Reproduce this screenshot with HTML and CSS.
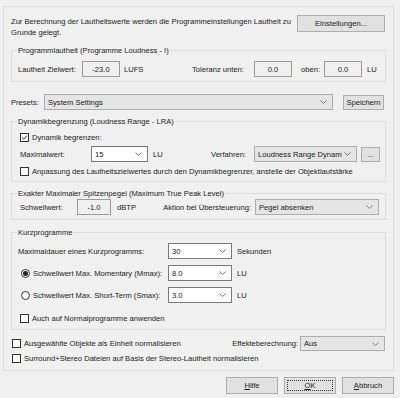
FILE: index.html
```html
<!DOCTYPE html>
<html lang="de">
<head>
<meta charset="utf-8">
<title>Lautheit</title>
<link rel="stylesheet" href="styles.css">
</head>
<body>
<div class="panel">
  <div class="intro">
    <p class="intro-text">Zur Berechnung der Lautheitswerte werden die Programmeinstellungen Lautheit zu<br>Grunde gelegt.</p>
    <button class="btn btn-settings">Einstellungen...</button>
  </div>

  <fieldset class="grp grp-prog">
    <legend>Programmlautheit (Programme Loudness - I)</legend>
    <div class="row pad6">
      <span class="lbl w64">Lautheit Zielwert:</span>
      <span class="tb w38">-23.0</span>
      <span class="lbl ml4 w68">LUFS</span>
      <span class="lbl w62">Toleranz unten:</span>
      <span class="tb w38">0.0</span>
      <span class="lbl ml9 w23">oben:</span>
      <span class="tb w38">0.0</span>
      <span class="lbl ml5">LU</span>
    </div>
  </fieldset>

  <div class="row presets">
    <span class="lbl w33">Presets:</span>
    <span class="cb-drop w289"><span class="val">System Settings</span><svg class="chev" viewBox="0 0 7 4"><path d="M0.5 0.5L3.5 3.5L6.5 0.5"/></svg></span>
    <button class="btn btn-save">Speichern</button>
  </div>

  <fieldset class="grp grp-dyn">
    <legend>Dynamikbegrenzung (Loudness Range - LRA)</legend>
    <div class="line pad8">
      <span class="check"><svg viewBox="0 0 8 8"><path d="M1.3 4L3.2 5.9L6.7 1.9"/></svg></span>
      <span class="ctext">Dynamik begrenzen:</span>
    </div>
    <div class="row pad8 mt3">
      <span class="lbl w71">Maximalwert:</span>
      <span class="cb-edit w57"><span class="val">15</span><svg class="chev" viewBox="0 0 7 4"><path d="M0.5 0.5L3.5 3.5L6.5 0.5"/></svg></span>
      <span class="lbl ml5 w58">LU</span>
      <span class="lbl w43">Verfahren:</span>
      <span class="cb-drop w103"><span class="val">Loudness Range Dynami</span><svg class="chev" viewBox="0 0 7 4"><path d="M0.5 0.5L3.5 3.5L6.5 0.5"/></svg></span>
      <button class="btn btn-dots">...</button>
    </div>
    <div class="line pad8 mt4">
      <span class="check"></span>
      <span class="ctext">Anpassung des Lautheitszielwertes durch den Dynamikbegrenzer, anstelle der Objektlautstärke</span>
    </div>
  </fieldset>

  <fieldset class="grp grp-peak">
    <legend>Exakter Maximaler Spitzenpegel (Maximum True Peak Level)</legend>
    <div class="row pad8">
      <span class="lbl w57">Schwellwert:</span>
      <span class="tb w34">-1.0</span>
      <span class="lbl ml6 w40">dBTP</span>
      <span class="lbl w98 right">Aktion bei Übersteuerung:</span>
      <span class="cb-drop w124"><span class="val">Pegel absenken</span><svg class="chev" viewBox="0 0 7 4"><path d="M0.5 0.5L3.5 3.5L6.5 0.5"/></svg></span>
    </div>
  </fieldset>

  <fieldset class="grp grp-short">
    <legend>Kurzprogramme</legend>
    <div class="row pad6">
      <span class="lbl w150">Maximaldauer eines Kurzprogramms:</span>
      <span class="cb-edit w64"><span class="val">30</span><svg class="chev" viewBox="0 0 7 4"><path d="M0.5 0.5L3.5 3.5L6.5 0.5"/></svg></span>
      <span class="lbl ml5">Sekunden</span>
    </div>
    <div class="row pad6 mt6">
      <span class="radio-wrap w150"><span class="radio on"></span><span class="ctext">Schwellwert Max. Momentary (Mmax):</span></span>
      <span class="cb-edit w64"><span class="val">8.0</span><svg class="chev" viewBox="0 0 7 4"><path d="M0.5 0.5L3.5 3.5L6.5 0.5"/></svg></span>
      <span class="lbl ml5">LU</span>
    </div>
    <div class="row pad6 mt6">
      <span class="radio-wrap w150"><span class="radio"></span><span class="ctext">Schwellwert Max. Short-Term (Smax):</span></span>
      <span class="cb-edit w64"><span class="val">3.0</span><svg class="chev" viewBox="0 0 7 4"><path d="M0.5 0.5L3.5 3.5L6.5 0.5"/></svg></span>
      <span class="lbl ml5">LU</span>
    </div>
    <div class="line pad8 mt10">
      <span class="check"></span>
      <span class="ctext">Auch auf Normalprogramme anwenden</span>
    </div>
  </fieldset>

  <div class="row bottom-row">
    <span class="check ml1"></span>
    <span class="ctext">Ausgewählte Objekte als Einheit normalisieren</span>
    <span class="lbl effekt">Effekteberechnung:</span>
    <span class="cb-drop w85"><span class="val">Aus</span><svg class="chev" viewBox="0 0 7 4"><path d="M0.5 0.5L3.5 3.5L6.5 0.5"/></svg></span>
  </div>
  <div class="line mt2">
    <span class="check ml1"></span>
    <span class="ctext">Surround+Stereo Dateien auf Basis der Stereo-Lautheit normalisieren</span>
  </div>
</div>

<div class="actions">
  <button class="btn btn-act"><u>H</u>ilfe</button>
  <button class="btn btn-act btn-ok"><span class="focus"><u>O</u>K</span></button>
  <button class="btn btn-act"><u>A</u>bbruch</button>
</div>
</body>
</html>
```

FILE: styles.css
```css
* { box-sizing: border-box; }
html, body { margin: 0; padding: 0; }
body {
  width: 400px;
  height: 398px;
  overflow: hidden;
  background: #f0f0f0;
  font-family: "Liberation Sans", Arial, sans-serif;
  font-size: 7.6px;
  color: #1a1a1a;
}

.panel {
  margin: 6px 6px 0 3px;
  height: 365px;
  border: 1px solid #dcdcdc;
  padding: 8px 7px 0 7px;
  display: flex;
  flex-direction: column;
}

.intro {
  display: flex;
  justify-content: space-between;
  align-items: flex-start;
  height: 23px;
}
.intro-text { margin: 1px 0 0; line-height: 11px; white-space: nowrap; }

.btn {
  font: inherit;
  color: #1a1a1a;
  background: #e1e1e1;
  border: 1px solid #adadad;
  padding: 0;
  margin: 0;
  display: flex;
  align-items: center;
  justify-content: center;
}
.btn-settings { width: 88px; height: 17px; margin-right: 1px; }
.btn-save { width: 41px; height: 15px; margin-left: 10px; }
.btn-dots { width: 19px; height: 15px; margin-left: 4px; }

.grp {
  margin: 0;
  padding: 0;
  min-width: 0;
  border: 1px solid #dcdcdc;
}
.grp legend {
  margin-left: 5px;
  padding: 0 1px;
  line-height: 11px;
}
.grp-prog { margin-top: 7px; padding-top: 5px; padding-bottom: 4px; }
.grp-dyn { margin-top: 6px; padding-top: 5px; padding-bottom: 4px; }
.grp-peak { margin-top: 6px; padding-top: 0; padding-bottom: 4px; }
.grp-short { margin-top: 7px; padding-top: 5px; padding-bottom: 5px; }

.row { display: flex; align-items: center; height: 16px; white-space: nowrap; }
.line { display: flex; align-items: center; height: 11px; white-space: nowrap; }
.pad6 { padding-left: 6px; }
.pad8 { padding-left: 8px; }
.mt2 { margin-top: 2px; }
.mt3 { margin-top: 3px; }
.mt4 { margin-top: 4px; }
.mt6 { margin-top: 6px; }
.mt10 { margin-top: 10px; }
.ml1 { margin-left: 1px; }
.ml4 { margin-left: 4px; }
.ml5 { margin-left: 5px; }
.ml6 { margin-left: 6px; }
.ml9 { margin-left: 9px; }

.lbl { flex: none; white-space: nowrap; }
.right { text-align: right; padding-right: 4px; }
.w23 { width: 23px; } .w33 { width: 33px; } .w34 { width: 34px; }
.w38 { width: 38px; } .w40 { width: 40px; } .w43 { width: 43px; }
.w57 { width: 57px; } .w58 { width: 58px; } .w62 { width: 62px; }
.w64 { width: 64px; } .w68 { width: 68px; } .w71 { width: 71px; }
.w85 { width: 85px; } .w98 { width: 98px; } .w103 { width: 103px; }
.w124 { width: 124px; } .w150 { width: 150px; } .w289 { width: 289px; }

.tb {
  flex: none;
  height: 16px;
  border: 1px solid #9a9a9a;
  background: #f0f0f0;
  display: flex;
  align-items: center;
  justify-content: center;
}

.cb-edit, .cb-drop {
  flex: none;
  height: 16px;
  display: flex;
  align-items: center;
  padding: 0 5px 0 3px;
  overflow: hidden;
}
.cb-edit { background: #fff; border: 1px solid #7a7a7a; }
.cb-drop { background: #e5e5e5; border: 1px solid #acacac; }
.val { flex: 1; overflow: hidden; white-space: nowrap; }
.chev { flex: none; width: 7px; height: 4px; margin-left: 2px; }
.chev path { fill: none; stroke: #6a6a6a; stroke-width: 0.9; }

.presets { margin-top: 12px; }

.check {
  flex: none;
  width: 9px;
  height: 9px;
  border: 1px solid #333;
  background: #fff;
  display: flex;
}
.check svg { width: 7px; height: 7px; }
.check path { fill: none; stroke: #222; stroke-width: 1.1; }
.ctext { margin-left: 3px; white-space: nowrap; }

.radio-wrap { flex: none; display: flex; align-items: center; padding-left: 3px; }
.radio {
  flex: none;
  width: 9px;
  height: 9px;
  border: 1px solid #333;
  border-radius: 50%;
  background: #fff;
  display: flex;
  align-items: center;
  justify-content: center;
}
.radio.on::after {
  content: "";
  width: 5px;
  height: 5px;
  border-radius: 50%;
  background: #222;
}

.bottom-row { margin-top: 6px; height: 15px; }
.bottom-row .cb-drop { height: 15px; margin-right: 1px; }
.effekt { margin-left: auto; margin-right: 2px; }

.actions {
  display: flex;
  justify-content: flex-end;
  gap: 6px;
  margin-top: 6px;
  padding-right: 6px;
}
.btn-act { width: 52px; height: 17px; }
.btn-ok { padding: 2px; }
.focus {
  width: 100%;
  height: 100%;
  border: 1px dotted #333;
  display: flex;
  align-items: center;
  justify-content: center;
}
u { text-decoration-thickness: 1px; }
```
